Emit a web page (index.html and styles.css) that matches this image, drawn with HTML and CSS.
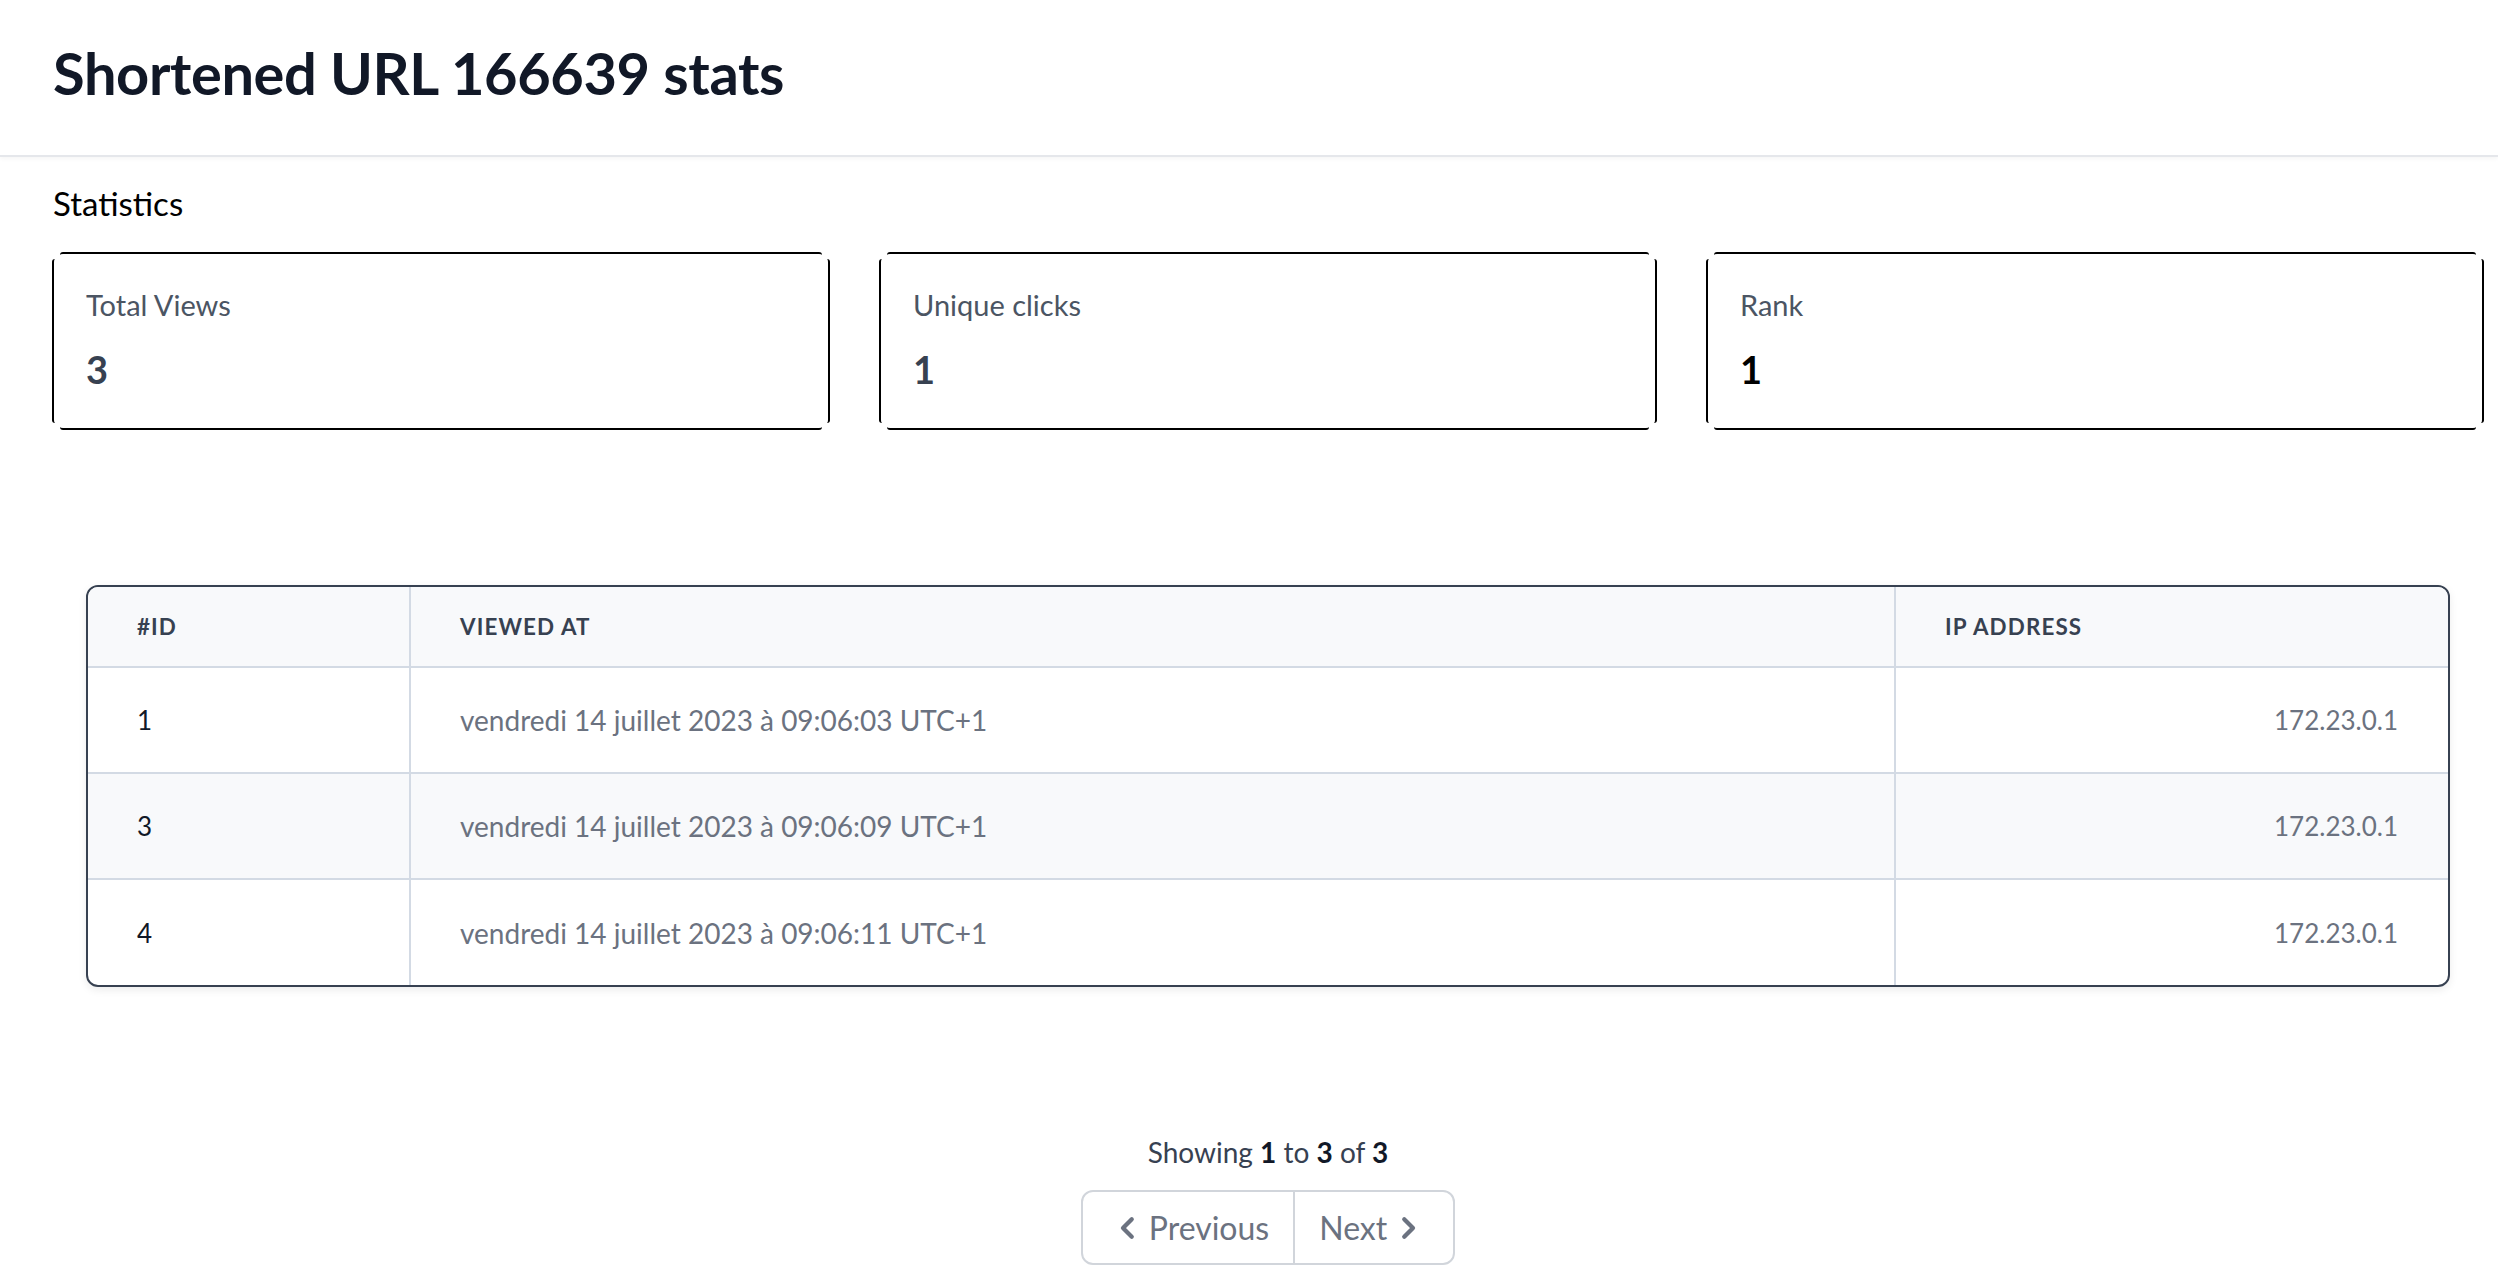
FILE: index.html
```html
<!DOCTYPE html>
<html lang="fr">
<head>
<meta charset="utf-8">
<title>Shortened URL 166639 stats</title>
<link rel="stylesheet" href="styles.css">
</head>
<body>
<header class="page-header">
  <h1 class="page-title">Shortened URL 166639 stats</h1>
</header>
<main class="content">
  <h2 class="section-title">Statistics</h2>
  <div class="stats">
    <div class="stat-card">
      <div class="stat-label">Total Views</div>
      <div class="stat-value">3</div>
    </div>
    <div class="stat-card">
      <div class="stat-label">Unique clicks</div>
      <div class="stat-value">1</div>
    </div>
    <div class="stat-card">
      <div class="stat-label">Rank</div>
      <div class="stat-value stat-value-dark">1</div>
    </div>
  </div>

  <div class="table-area">
    <div class="table-frame">
      <table class="views">
        <thead>
          <tr>
            <th class="col-id">#ID</th>
            <th class="col-date">Viewed at</th>
            <th class="col-ip">IP Address</th>
          </tr>
        </thead>
        <tbody>
          <tr>
            <td class="cell-id">1</td>
            <td class="cell-muted cell-date">vendredi 14 juillet 2023 à 09:06:03 UTC+1</td>
            <td class="cell-muted cell-right">172.23.0.1</td>
          </tr>
          <tr class="row-alt">
            <td class="cell-id">3</td>
            <td class="cell-muted cell-date">vendredi 14 juillet 2023 à 09:06:09 UTC+1</td>
            <td class="cell-muted cell-right">172.23.0.1</td>
          </tr>
          <tr>
            <td class="cell-id">4</td>
            <td class="cell-muted cell-date">vendredi 14 juillet 2023 à 09:06:11 UTC+1</td>
            <td class="cell-muted cell-right">172.23.0.1</td>
          </tr>
        </tbody>
      </table>
    </div>

    <nav class="pagination">
      <p class="showing">Showing <strong>1</strong> to <strong>3</strong> of <strong>3</strong></p>
      <div class="pager">
        <span class="pager-btn">
          <svg class="chev" viewBox="0 0 24 24" width="30" height="30" aria-hidden="true"><path d="M15 5 L8 12 L15 19" fill="none" stroke="currentColor" stroke-width="3.4" stroke-linecap="round" stroke-linejoin="round"/></svg>
          Previous
        </span>
        <span class="pager-btn pager-btn-next">
          Next
          <svg class="chev" viewBox="0 0 24 24" width="30" height="30" aria-hidden="true"><path d="M9 5 L16 12 L9 19" fill="none" stroke="currentColor" stroke-width="3.4" stroke-linecap="round" stroke-linejoin="round"/></svg>
        </span>
      </div>
    </nav>
  </div>
</main>
</body>
</html>
```

FILE: styles.css
```css
html, body {
  margin: 0;
  padding: 0;
  background: #ffffff;
}

body {
  font-family: "Lato", "Liberation Sans", sans-serif;
  color: #111827;
}

.page-header {
  height: 157px;
  display: flex;
  align-items: center;
  padding: 0 0 10px 53px;
  box-sizing: border-box;
  border-bottom: 2px solid #e5e7eb;
  box-shadow: 0 2px 4px rgba(0, 0, 0, 0.04);
}

.page-title {
  margin: 0;
  font-size: 57.8px;
  font-weight: 700;
  letter-spacing: -0.4px;
  color: #111827;
}

.content {
  padding: 0 14px 0 52px;
}

.section-title {
  margin: 26px 0 29px 1px;
  font-size: 33px;
  line-height: 40px;
  font-weight: 400;
  color: #000000;
}

.stats {
  display: grid;
  grid-template-columns: repeat(3, 1fr);
  gap: 49px;
}

.stat-card {
  position: relative;
  height: 178px;
  box-sizing: border-box;
  padding: 35px 34px 0 34px;
}

.stat-card::before,
.stat-card::after {
  content: "";
  position: absolute;
  pointer-events: none;
}

.stat-card::before {
  left: 8px;
  right: 8px;
  top: 0;
  bottom: 0;
  border-top: 2.5px solid #000;
  border-bottom: 2.5px solid #000;
  border-radius: 3px;
}

.stat-card::after {
  left: 0;
  right: 0;
  top: 7px;
  bottom: 7px;
  border-left: 2.5px solid #000;
  border-right: 2.5px solid #000;
  border-radius: 3px;
}

.stat-label {
  font-size: 29px;
  line-height: 36px;
  color: #4b5563;
}

.stat-value {
  margin-top: 24px;
  font-size: 38px;
  line-height: 44px;
  font-weight: 700;
  color: #374151;
}

.stat-value-dark {
  color: #000000;
}

.table-area {
  margin-top: 155px;
  padding: 0 34px;
}

.table-frame {
  border: 2px solid #374151;
  border-radius: 12px;
  overflow: hidden;
  box-shadow: 0 3px 8px rgba(0, 0, 0, 0.08);
}

.views {
  width: 100%;
  border-collapse: collapse;
  table-layout: fixed;
}

.views th {
  height: 79px;
  background: #f8f9fb;
  text-align: left;
  font-size: 22.4px;
  font-weight: 700;
  letter-spacing: 0.05em;
  text-transform: uppercase;
  color: #374151;
  padding: 0 0 0 49px;
  border-bottom: 2px solid #d3dae4;
}

.views td {
  height: 104px;
  padding: 0 50px 0 49px;
  font-size: 26px;
  border-bottom: 2px solid #d3dae4;
}

.views td.cell-date {
  font-size: 28px;
}

.views tbody tr:last-child td {
  border-bottom: 0;
  height: 105px;
}

.views th + th,
.views td + td {
  border-left: 2px solid #d3dae4;
}

.col-id {
  width: 272px;
}

.col-ip {
  width: 503px;
}

.row-alt td {
  background: #f8f9fb;
}

.cell-id {
  color: #111827;
}

.cell-muted {
  color: #6b7280;
}

.cell-right {
  text-align: right;
}

.pagination {
  display: flex;
  flex-direction: column;
  align-items: center;
}

.showing {
  margin: 147px 0 20px 0;
  font-size: 28px;
  line-height: 36px;
  color: #374151;
}

.showing strong {
  font-weight: 700;
  color: #111827;
}

.pager {
  display: flex;
  height: 75px;
  box-sizing: border-box;
  border: 2px solid #d1d5db;
  border-radius: 12px;
  overflow: hidden;
}

.pager-btn {
  display: flex;
  align-items: center;
  gap: 6px;
  padding: 0 24px 0 30px;
  font-size: 32px;
  color: #6b7280;
}

.pager-btn-next {
  padding: 0 30px 0 24px;
  border-left: 2px solid #d1d5db;
}

.chev {
  display: block;
  color: #6b7280;
}
```
